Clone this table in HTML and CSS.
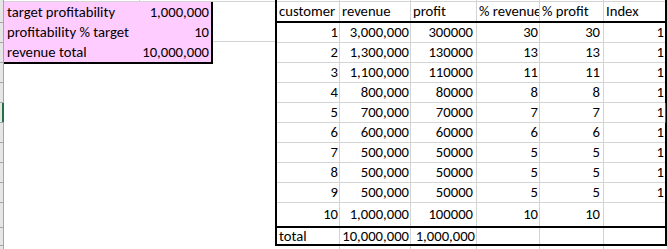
FILE: index.html
```html
<!DOCTYPE html>
<html>
<head>
<meta charset="utf-8">
<link rel="stylesheet" href="styles.css">
</head>
<body>
<div class="sheet">
  <div class="strip">
    <div class="rh rh-top"></div>
    <div class="rh"></div>
    <div class="rh"></div>
    <div class="rh"></div>
    <div class="rh"></div>
    <div class="rh"></div>
    <div class="rh rh-sel"></div>
    <div class="rh"></div>
    <div class="rh"></div>
    <div class="rh"></div>
    <div class="rh"></div>
    <div class="rh rh-tall"></div>
    <div class="rh rh-total"></div>
  </div>

  <div class="inputs">
    <div class="sliver"><span></span><span></span></div>
    <div class="box">
      <div class="in-row"><span class="lbl">target profitability</span><span class="val">1,000,000</span></div>
      <div class="in-row"><span class="lbl">profitability % target</span><span class="val">10</span></div>
      <div class="in-row"><span class="lbl">revenue total</span><span class="val">10,000,000</span></div>
    </div>
  </div>

  <div class="colc">
    <div class="c-top"></div>
    <div class="c-row"></div>
    <div class="c-row c-line"></div>
  </div>

  <div class="tablewrap">
    <div class="table">
      <div class="trow t-sliver"><div></div><div></div><div></div><div></div><div></div><div></div></div>
      <div class="trow t-head"><div>customer</div><div>revenue</div><div>profit</div><div>% revenue</div><div>% profit</div><div>Index</div></div>
      <div class="trow"><div class="r">1</div><div class="r">3,000,000</div><div class="r p">300000</div><div class="r">30</div><div class="r q">30</div><div class="r">1</div></div>
      <div class="trow"><div class="r">2</div><div class="r">1,300,000</div><div class="r p">130000</div><div class="r">13</div><div class="r q">13</div><div class="r">1</div></div>
      <div class="trow"><div class="r">3</div><div class="r">1,100,000</div><div class="r p">110000</div><div class="r">11</div><div class="r q">11</div><div class="r">1</div></div>
      <div class="trow"><div class="r">4</div><div class="r">800,000</div><div class="r p">80000</div><div class="r">8</div><div class="r q">8</div><div class="r">1</div></div>
      <div class="trow sel"><div class="r">5</div><div class="r">700,000</div><div class="r p">70000</div><div class="r">7</div><div class="r q">7</div><div class="r">1</div></div>
      <div class="trow"><div class="r">6</div><div class="r">600,000</div><div class="r p">60000</div><div class="r">6</div><div class="r q">6</div><div class="r">1</div></div>
      <div class="trow"><div class="r">7</div><div class="r">500,000</div><div class="r p">50000</div><div class="r">5</div><div class="r q">5</div><div class="r">1</div></div>
      <div class="trow"><div class="r">8</div><div class="r">500,000</div><div class="r p">50000</div><div class="r">5</div><div class="r q">5</div><div class="r">1</div></div>
      <div class="trow"><div class="r">9</div><div class="r">500,000</div><div class="r p">50000</div><div class="r">5</div><div class="r q">5</div><div class="r">1</div></div>
      <div class="trow t-last"><div class="r">10</div><div class="r">1,000,000</div><div class="r p">100000</div><div class="r">10</div><div class="r q">10</div><div class="r"></div></div>
      <div class="trow t-total"><div>total</div><div class="r">10,000,000</div><div class="r">1,000,000</div><div></div><div></div><div></div></div>
    </div>
    <div class="under"><div></div><div></div><div></div><div></div><div></div><div></div></div>
  </div>
</div>
</body>
</html>
```

FILE: styles.css
```css
body {
  margin: 0;
  background: #fff;
  font-family: Carlito, Calibri, Lato, sans-serif;
  font-size: 14.67px;
  color: #000;
}

.sheet {
  display: flex;
  height: 249px;
  overflow: hidden;
}

/* row header strip */
.strip {
  width: 3px;
  background: #e6e6e6;
  border-right: 1px solid #a6a6a6;
  display: flex;
  flex-direction: column;
}
.rh {
  height: 19px;
  border-bottom: 1px solid #a6a6a6;
  position: relative;
  flex: none;
}
.rh-top { height: 3px; border-bottom: 0; }
.rh-tall { height: 24px; }
.rh-total { height: 17px; }
.rh-sel::after {
  content: "";
  position: absolute;
  top: 0;
  bottom: 0;
  right: -1px;
  width: 2px;
  background: #217346;
}

/* input box */
.inputs {
  width: 209px;
  display: flex;
  flex-direction: column;
  flex: none;
}
.sliver {
  height: 1px;
  border-bottom: 1px solid #d4d4d4;
  display: grid;
  grid-template-columns: 136px 73px;
}
.sliver span:first-child { border-right: 1px solid #d4d4d4; }
.box {
  background: #ffccff;
  border-right: 2px solid #000;
  border-bottom: 2px solid #000;
}
.in-row {
  display: grid;
  grid-template-columns: 136px 71px;
  height: 20px;
  line-height: 20px;
}
.lbl { padding-left: 3px; white-space: nowrap; }
.val { text-align: right; padding-right: 2px; white-space: nowrap; }

/* column C */
.colc {
  width: 62px;
  flex: none;
  display: flex;
  flex-direction: column;
}
.c-top { height: 1px; border-bottom: 1px solid #d4d4d4; }
.c-row { height: 20px; }
.c-line { height: 19px; border-bottom: 1px solid #d4d4d4; }

/* table */
.tablewrap {
  width: 392px;
  flex: none;
  display: flex;
  flex-direction: column;
}
.table {
  border-left: 2px solid #000;
  border-right: 2px solid #000;
  border-bottom: 2px solid #000;
}
.trow {
  display: grid;
  grid-template-columns: 63px 71px 66px 63px 64px 61px;
  box-sizing: border-box;
  height: 20px;
  line-height: 19px;
  border-bottom: 1px solid #d4d4d4;
}
.trow > div {
  border-right: 1px solid #d4d4d4;
  padding: 0 1px 0 2px;
  white-space: nowrap;
  overflow: hidden;
}
.trow > div:last-child { border-right: 0; }
.trow .r { text-align: right; }
.trow .p { padding-right: 3px; }
.trow .q { padding-right: 3px; }

.t-sliver { height: 2px; line-height: 1px; }
.t-head { height: 21px; border-bottom: 2px solid #000; }
.t-last { height: 25px; line-height: 23px; border-bottom: 2px solid #000; }
.t-total { height: 16px; line-height: 16px; border-bottom: 0; }

.sel { position: relative; }
.sel::after {
  content: "";
  position: absolute;
  top: 0;
  bottom: -1px;
  right: -1px;
  width: 1px;
  background: #217346;
}

.under {
  display: grid;
  grid-template-columns: 63px 71px 66px 63px 64px 61px;
  height: 3px;
  margin-left: 2px;
}
.under > div { border-right: 1px solid #d4d4d4; }
.under > div:last-child { border-right: 0; }
```
